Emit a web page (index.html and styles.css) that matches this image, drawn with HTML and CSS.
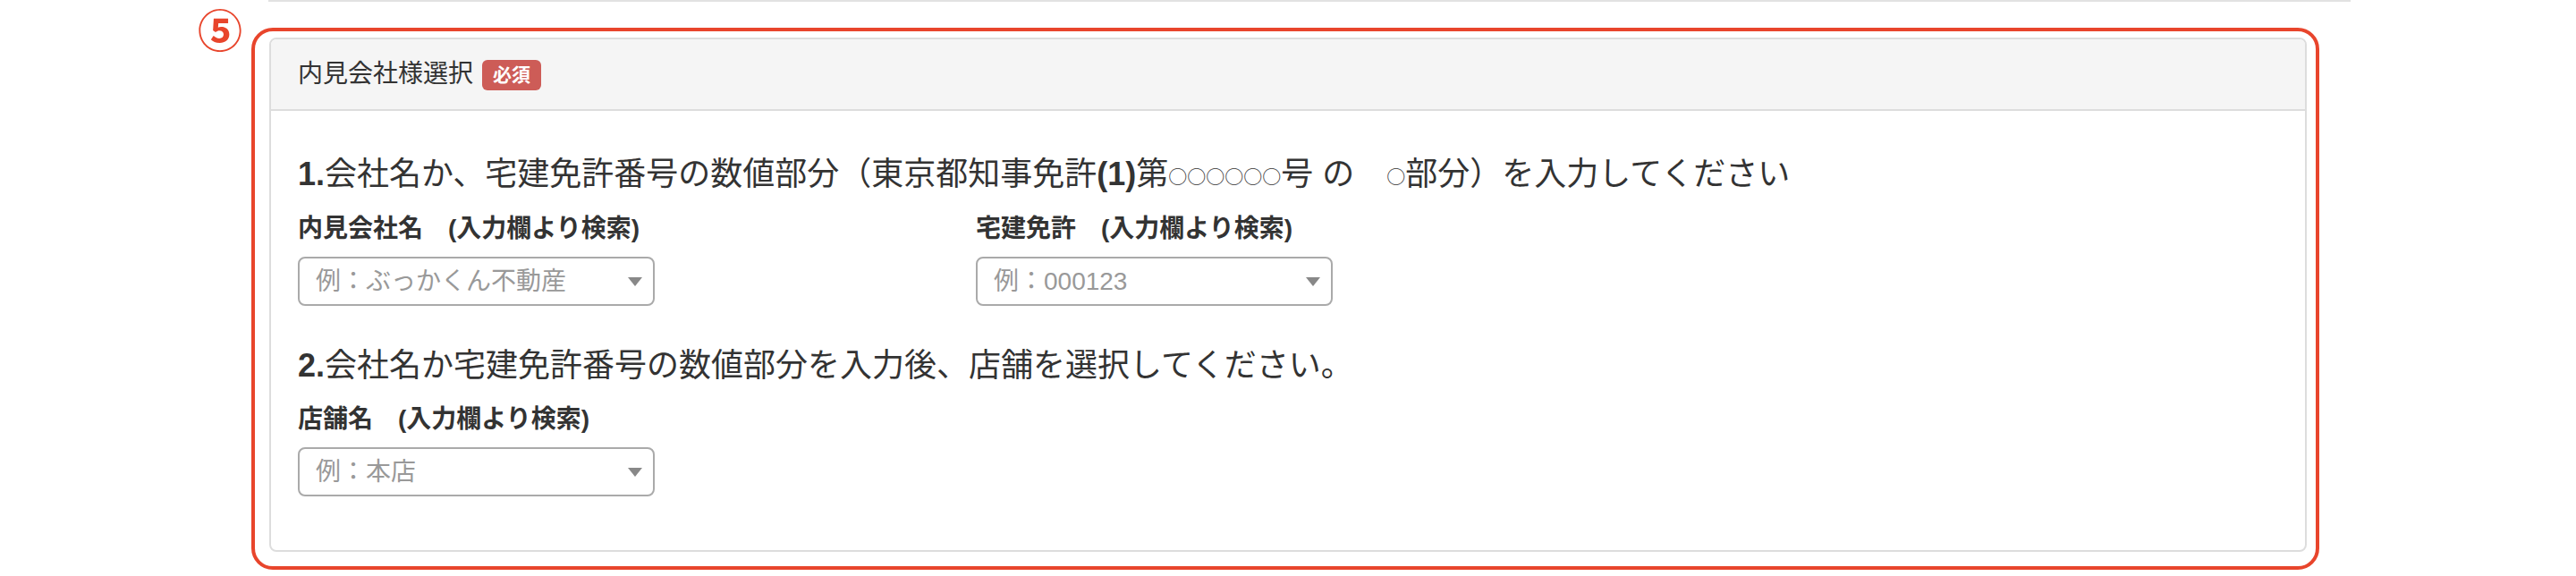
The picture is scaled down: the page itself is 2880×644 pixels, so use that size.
FILE: index.html
```html
<!DOCTYPE html>
<html lang="ja">
<head>
<meta charset="utf-8">
<title>内見会社様選択</title>
<link rel="stylesheet" href="styles.css">
</head>
<body>
<div class="page">
  <div class="divider"></div>
  <div class="section">
    <span class="step">⑤</span>
    <div class="highlight"></div>
    <div class="panel">
      <div class="panel-heading">
        <span class="panel-title">内見会社様選択</span>
        <span class="badge">必須</span>
      </div>
      <div class="panel-body">
        <h4 class="step-title"><b>1.</b>会社名か、宅建免許番号の数値部分（東京都知事免許<b>(1)</b>第<span class="circ">○○○○○○</span>号 の　<span class="circ">○</span>部分）を入力してください</h4>
        <div class="fields">
          <div class="field">
            <label class="field-label">内見会社名　<span class="hint">(入力欄より検索)</span></label>
            <div class="select"><span class="placeholder">例：ぶっかくん不動産</span><span class="arrow"></span></div>
          </div>
          <div class="field">
            <label class="field-label">宅建免許　<span class="hint">(入力欄より検索)</span></label>
            <div class="select"><span class="placeholder">例：000123</span><span class="arrow"></span></div>
          </div>
        </div>
        <h4 class="step-title"><b>2.</b>会社名か宅建免許番号の数値部分を入力後、店舗を選択してください。</h4>
        <div class="fields">
          <div class="field">
            <label class="field-label">店舗名　<span class="hint">(入力欄より検索)</span></label>
            <div class="select"><span class="placeholder">例：本店</span><span class="arrow"></span></div>
          </div>
        </div>
      </div>
    </div>
  </div>
</div>
</body>
</html>
```

FILE: styles.css
```css
* { box-sizing: border-box; }
html, body { margin: 0; padding: 0; background: #fff; }
body {
  font-family: "Liberation Sans", "Noto Sans CJK JP", sans-serif;
  color: #333;
  width: 2880px;
  height: 644px;
  overflow: hidden;
}
.page { padding-left: 300px; }
.divider { width: 2328px; height: 2px; background: #e2e2e2; }
.section {
  position: relative;
  margin: 40px 0 0 1px;
  width: 2278px;
}
.step {
  position: absolute;
  left: -80px;
  top: -36px;
  font-family: "Noto Sans CJK JP", sans-serif;
  font-weight: bold;
  font-size: 50px;
  line-height: 1;
  color: #e8452c;
}
.highlight {
  position: absolute;
  left: -20px;
  top: -11px;
  width: 2312px;
  height: 606px;
  border: 4px solid #e8452c;
  border-radius: 24px;
  pointer-events: none;
}
.panel {
  border: 2px solid #dddddd;
  border-radius: 8px;
  background: #fff;
  overflow: hidden;
}
.panel-heading {
  display: flex;
  align-items: center;
  gap: 10px;
  background: #f5f5f5;
  border-bottom: 2px solid #dddddd;
  padding: 19px 30px 19px 30px;
  height: 80px;
}
.panel-title { font-size: 28px; line-height: 40px; color: #333; }
.badge {
  display: inline-block;
  background: #cd5c57;
  color: #fff;
  font-weight: bold;
  font-size: 21px;
  line-height: 1;
  padding: 6px 12px 7px;
  border-radius: 6px;
  margin-top: 2px;
}
.panel-body {
  display: flex;
  flex-direction: column;
  padding: 30px 30px 34px;
}
.step-title {
  margin: 21px 0 20px;
  font-size: 36px;
  line-height: 40px;
  font-weight: normal;
  color: #333;
  white-space: nowrap;
}
.step-title b { font-weight: bold; }
.circ {
  font-family: "Noto Sans CJK JP", sans-serif;
  font-size: 21px;
  vertical-align: 2px;
}
.fields {
  display: grid;
  grid-template-columns: repeat(3, 1fr);
  column-gap: 60px;
  margin-bottom: 26px;
}
.field-label {
  display: block;
  font-size: 28px;
  line-height: 40px;
  font-weight: bold;
  color: #333;
  margin-bottom: 11px;
  white-space: nowrap;
}
.select {
  position: relative;
  display: flex;
  align-items: center;
  width: 399px;
  height: 55px;
  border: 2px solid #aaaaaa;
  border-radius: 8px;
  padding-left: 18px;
  background: #fff;
}
.placeholder { font-size: 28px; color: #999; line-height: 1; }
.arrow {
  position: absolute;
  right: 12px;
  top: 50%;
  margin-top: -5px;
  width: 0;
  height: 0;
  border-style: solid;
  border-width: 10px 8px 0 8px;
  border-color: #888 transparent transparent transparent;
}
```
